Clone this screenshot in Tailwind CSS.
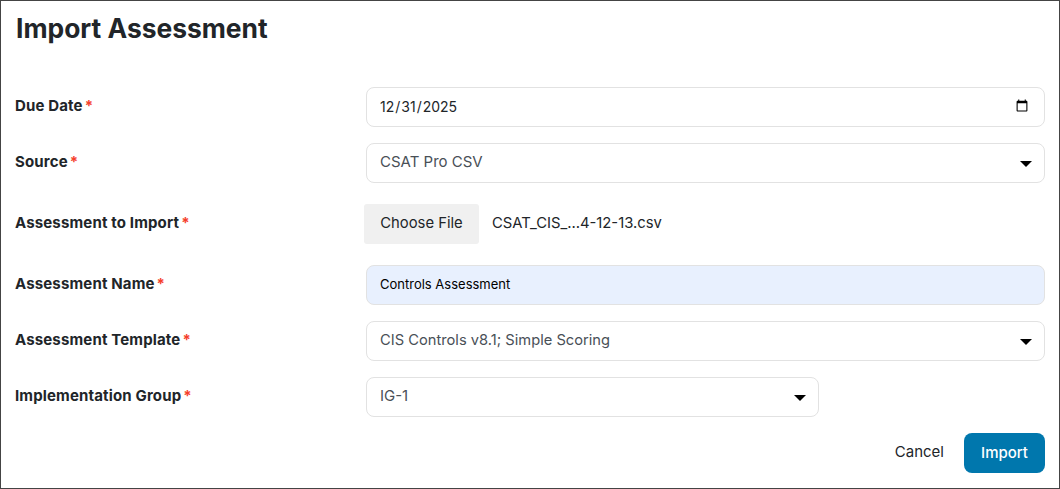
<!DOCTYPE html>
<html lang="en-US">
<head>
<meta charset="utf-8">
<script src="https://cdn.jsdelivr.net/npm/@tailwindcss/browser@4"></script>
<title>Import Assessment</title>
</head>
<body class="bg-white">
<div class="w-[1060px] h-[489px] border border-[#444] bg-white font-['Inter',sans-serif] text-[#212529] overflow-hidden box-border pl-[14px] pr-[14px] flex flex-col">
  <h1 class="text-[26.4px] leading-[32px] font-bold mt-[11px] pl-px h-[32px]">Import Assessment</h1>

  <div class="flex items-center h-[40px] mt-[43px]">
    <label class="w-[351px] text-[15px] font-bold tracking-[0.15px] pb-[2px]">Due Date<span class="text-[#f5402c] ml-[2px]">*</span></label>
    <input type="date" value="2025-12-31" class="w-[679px] h-[40px] border border-[#e2e2e2] rounded-lg pl-[12px] pr-[13px] pb-[2px] text-[14px] text-[#212529] bg-white">
  </div>

  <div class="flex items-center h-[40px] mt-[16px]">
    <label class="w-[351px] text-[15px] font-bold tracking-[0.15px] pb-[2px]">Source<span class="text-[#f5402c] ml-[2px]">*</span></label>
    <div class="w-[679px] h-[40px] border border-[#e2e2e2] rounded-lg pl-[13px] pr-[12px] pb-[2px] text-[15px] text-[#495057] flex items-center justify-between">
      <span>CSAT Pro CSV</span>
      <svg width="12" height="6" viewBox="0 0 12 6" class="mt-[4px]"><path d="M0 0h12L6 6z" fill="#000"/></svg>
    </div>
  </div>

  <div class="flex items-center h-[40px] mt-[21px]">
    <label class="w-[349px] text-[15px] font-bold tracking-[0.15px] pb-[2px]">Assessment to Import<span class="text-[#f5402c] ml-[2px]">*</span></label>
    <button class="w-[115px] h-[40px] bg-[#f0f0f0] rounded-[3px] text-[14.8px] text-[#212529] font-normal pb-[2px]">Choose File</button>
    <span class="ml-[13px] text-[14.8px] text-[#212529] pb-[2px]">CSAT_CIS_...4-12-13.csv</span>
  </div>

  <div class="flex items-center h-[40px] mt-[21px]">
    <label class="w-[351px] text-[15px] font-bold tracking-[0.15px] pb-[2px]">Assessment Name<span class="text-[#f5402c] ml-[2px]">*</span></label>
    <div class="w-[679px] h-[40px] border border-[#e2e2e2] rounded-lg pl-[13px] text-[13px] text-black bg-[#e8f0fe] flex items-center">Controls Assessment</div>
  </div>

  <div class="flex items-center h-[40px] mt-[16px]">
    <label class="w-[351px] text-[15px] font-bold tracking-[0.15px] pb-[2px]">Assessment Template<span class="text-[#f5402c] ml-[2px]">*</span></label>
    <div class="w-[679px] h-[40px] border border-[#e2e2e2] rounded-lg pl-[13px] pr-[12px] pb-[2px] text-[14.7px] text-[#495057] flex items-center justify-between">
      <span>CIS Controls v8.1; Simple Scoring</span>
      <svg width="12" height="6" viewBox="0 0 12 6" class="mt-[4px]"><path d="M0 0h12L6 6z" fill="#000"/></svg>
    </div>
  </div>

  <div class="flex items-center h-[40px] mt-[16px]">
    <label class="w-[351px] text-[15px] font-bold tracking-[0.15px] pb-[2px]">Implementation Group<span class="text-[#f5402c] ml-[2px]">*</span></label>
    <div class="w-[453px] h-[40px] border border-[#e2e2e2] rounded-lg pl-[13px] pr-[12px] pb-[2px] text-[15px] text-[#495057] flex items-center justify-between">
      <span>IG-1</span>
      <svg width="12" height="6" viewBox="0 0 12 6" class="mt-[4px]"><path d="M0 0h12L6 6z" fill="#000"/></svg>
    </div>
  </div>

  <div class="flex justify-end items-center mt-[16px]">
    <button class="text-[15px] text-[#212529] mr-[20px] -mt-[2px]">Cancel</button>
    <button class="w-[81px] h-[40px] rounded-lg bg-[#0077ad] text-white text-[15px] font-medium">Import</button>
  </div>
</div>
</body>
</html>
